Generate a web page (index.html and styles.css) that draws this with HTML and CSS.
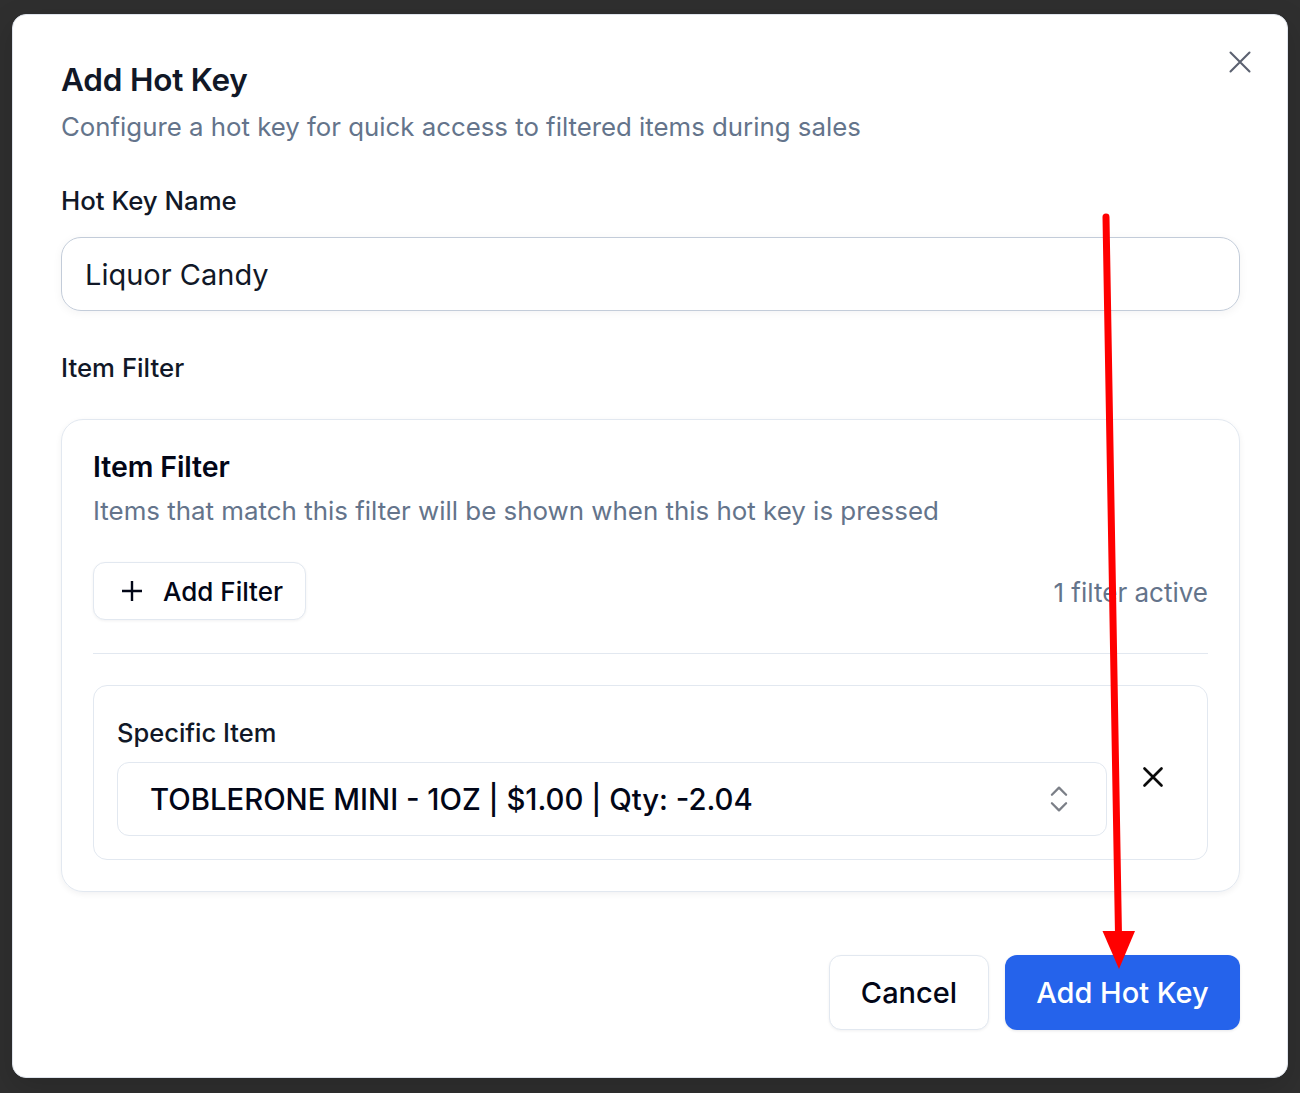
FILE: index.html
```html
<!DOCTYPE html>
<html lang="en">
<head>
<meta charset="utf-8">
<title>Add Hot Key</title>
<link rel="stylesheet" href="styles.css">
</head>
<body>
<div class="backdrop">
  <div class="modal" role="dialog" aria-labelledby="dlg-title">
    <button class="close-btn" aria-label="Close">
      <svg viewBox="0 0 24 24" width="38" height="38" fill="none" stroke="currentColor" stroke-width="1.3" stroke-linecap="round"><path d="M18 6 6 18M6 6l12 12"/></svg>
    </button>
    <header class="head">
      <h2 id="dlg-title" class="title">Add Hot Key</h2>
      <p class="desc">Configure a hot key for quick access to filtered items during sales</p>
    </header>

    <label class="label label-name">Hot Key Name</label>
    <div class="text-input">Liquor Candy</div>

    <div class="label label-filter">Item Filter</div>
    <section class="card">
      <h3 class="card-title">Item Filter</h3>
      <p class="card-desc">Items that match this filter will be shown when this hot key is pressed</p>
      <div class="toolbar">
        <button class="btn-outline add-filter">
          <svg viewBox="0 0 20 20" width="20" height="20" fill="none" stroke="currentColor" stroke-width="2.4"><path d="M0 10h20M10 0v20"/></svg>
          <span>Add Filter</span>
        </button>
        <span class="count">1 filter active</span>
      </div>
      <hr class="sep">
      <div class="filter-row">
        <div class="filter-main">
          <div class="filter-label">Specific Item</div>
          <div class="select">
            <span>TOBLERONE MINI - 1OZ | $1.00 | Qty: -2.04</span>
            <svg class="chev" viewBox="0 0 24 24" width="34" height="34" fill="none" stroke="currentColor" stroke-width="1.6" stroke-linecap="round" stroke-linejoin="round"><path d="m7 15 5 5 5-5"/><path d="m7 9 5-5 5 5"/></svg>
          </div>
        </div>
        <button class="remove" aria-label="Remove filter">
          <svg viewBox="0 0 24 24" width="34" height="34" fill="none" stroke="currentColor" stroke-width="1.9" stroke-linecap="round"><path d="M18 6 6 18M6 6l12 12"/></svg>
        </button>
      </div>
    </section>

    <footer class="foot">
      <button class="btn-outline cancel">Cancel</button>
      <button class="btn-primary">Add Hot Key</button>
    </footer>
  </div>
</div>
<svg class="annot" width="1300" height="1093" viewBox="0 0 1300 1093">
  <line x1="1106" y1="217" x2="1118.5" y2="935" stroke="#ff0000" stroke-width="7" stroke-linecap="round"/>
  <polygon points="1102.5,931 1135,931 1119,969" fill="#ff0000"/>
</svg>
</body>
</html>
```

FILE: styles.css
```css
* { box-sizing: border-box; }
html, body { margin: 0; padding: 0; }
body {
  width: 1300px;
  height: 1093px;
  background: #2f2f2f;
  font-family: Inter, "Noto Sans", "Liberation Sans", sans-serif;
  color: #0f172a;
  overflow: hidden;
  position: relative;
}
.backdrop {
  padding: 14px 12px 0 12px;
}
.modal {
  position: relative;
  background: #ffffff;
  border: 1px solid #dfe4ec;
  border-radius: 14px;
  padding: 47px 47px 47px 48px;
  height: 1064px;
  box-shadow: 0 10px 30px rgba(0,0,0,0.15);
}
.close-btn {
  position: absolute;
  top: 28px;
  right: 28px;
  width: 38px;
  height: 38px;
  padding: 0;
  border: 0;
  background: none;
  color: #5b6170;
  display: flex;
}
.head { display: flex; flex-direction: column; gap: 13px; }
.title {
  margin: 0;
  font-size: 31.5px;
  line-height: 36px;
  font-weight: 600;
  letter-spacing: -0.2px;
  color: #111827;
}
.desc {
  margin: 0;
  font-size: 25.8px;
  line-height: 32px;
  color: #64748b;
}
.label {
  display: block;
  font-size: 25.8px;
  line-height: 32px;
  font-weight: 500;
  color: #111827;
}
.label-name { margin-top: 42px; }
.text-input {
  margin-top: 20px;
  height: 74px;
  border: 1.5px solid #c3ccd9;
  border-radius: 20px;
  padding: 0 23px;
  display: flex;
  align-items: center;
  font-size: 29px;
  color: #111827;
  box-shadow: 0 2px 10px rgba(15,23,42,0.05);
}
.label-filter { margin-top: 41px; }
.card {
  margin-top: 35px;
  border: 1.5px solid #e2e8f0;
  border-radius: 22px;
  padding: 30px 31px 31px 31px;
  box-shadow: 0 2px 6px rgba(15,23,42,0.06);
}
.card-title {
  margin: 0;
  font-size: 28.5px;
  line-height: 34px;
  font-weight: 600;
  letter-spacing: -0.1px;
  color: #020617;
}
.card-desc {
  margin: 11px 0 0 0;
  font-size: 25.9px;
  line-height: 32px;
  color: #64748b;
}
.toolbar {
  margin-top: 35px;
  display: flex;
  align-items: center;
  justify-content: space-between;
}
.btn-outline {
  font-family: inherit;
  background: #fff;
  border: 1.5px solid #e2e8f0;
  border-radius: 12px;
  color: #020617;
  font-weight: 500;
  box-shadow: 0 1px 3px rgba(15,23,42,0.06);
}
.add-filter {
  height: 58px;
  width: 213px;
  padding: 0 0 0 28px;
  display: flex;
  align-items: center;
  gap: 21px;
  font-size: 26px;
}
.add-filter svg { flex: none; }
.count {
  font-size: 26px;
  color: #64748b;
  padding-top: 2px;
}
.sep {
  margin: 33px 0 0 0;
  border: 0;
  border-top: 1.5px solid #e2e8f0;
}
.filter-row {
  margin-top: 31px;
  border: 1.5px solid #e2e8f0;
  border-radius: 14px;
  padding: 31px 30px 23px 23px;
  display: flex;
  align-items: center;
  gap: 22px;
}
.filter-main { flex: 1; }
.filter-label {
  font-size: 25.5px;
  line-height: 32px;
  font-weight: 500;
  color: #111827;
}
.select {
  margin-top: 13px;
  height: 74px;
  border: 1.5px solid #e2e8f0;
  border-radius: 12px;
  padding: 0 30px 0 32px;
  display: flex;
  align-items: center;
  justify-content: space-between;
  font-size: 29.3px;
  font-weight: 500;
  color: #020617;
}
.chev { color: #7b7f87; }
.remove {
  width: 48px;
  height: 48px;
  padding: 0;
  border: 0;
  background: none;
  color: #0b0b0b;
  display: flex;
  align-items: center;
  justify-content: center;
}
.foot {
  margin-top: 63px;
  display: flex;
  justify-content: flex-end;
  gap: 16px;
}
.foot button {
  height: 75px;
  font-size: 29px;
  font-family: inherit;
  font-weight: 500;
}
.cancel { width: 160px; }
.btn-primary {
  width: 235px;
  background: #2563eb;
  border: 0;
  border-radius: 12px;
  color: #fff;
  box-shadow: 0 1px 3px rgba(15,23,42,0.1);
}
.annot {
  position: absolute;
  left: 0;
  top: 0;
  pointer-events: none;
}
```
